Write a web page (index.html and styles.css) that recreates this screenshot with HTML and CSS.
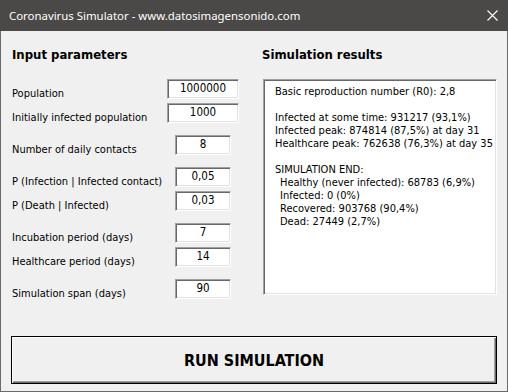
FILE: index.html
```html
<!DOCTYPE html>
<html>
<head>
<meta charset="utf-8">
<link rel="stylesheet" href="styles.css">
</head>
<body>
<div class="window">
  <div class="titlebar">
    <span class="title">Coronavirus Simulator - www.datosimagensonido.com</span>
    <svg class="close" width="11" height="11" viewBox="0 0 11 11"><path d="M0.5 0.5 L10.5 10.5 M10.5 0.5 L0.5 10.5" stroke="#fff" stroke-width="1.1"/></svg>
  </div>
  <div class="content">
    <div class="panels">
      <div class="left">
        <h2 class="heading">Input parameters</h2>
        <div class="params">
          <div class="row r1"><span class="label">Population</span><span class="field wide">1000000</span></div>
          <div class="row r2"><span class="label">Initially infected population</span><span class="field wide">1000</span></div>
          <div class="row r3"><span class="label">Number of daily contacts</span><span class="field">8</span></div>
          <div class="row r3"><span class="label">P (Infection | Infected contact)</span><span class="field">0,05</span></div>
          <div class="row r2"><span class="label">P (Death | Infected)</span><span class="field">0,03</span></div>
          <div class="row r3"><span class="label">Incubation period (days)</span><span class="field">7</span></div>
          <div class="row r2"><span class="label">Healthcare period (days)</span><span class="field">14</span></div>
          <div class="row r3"><span class="label">Simulation span (days)</span><span class="field">90</span></div>
        </div>
      </div>
      <div class="right">
        <h2 class="heading">Simulation results</h2>
        <div class="results">
          <div class="line">Basic reproduction number (R0): 2,8</div>
          <div class="line">&nbsp;</div>
          <div class="line">Infected at some time: 931217 (93,1%)</div>
          <div class="line">Infected peak: 874814 (87,5%) at day 31</div>
          <div class="line">Healthcare peak: 762638 (76,3%) at day 35</div>
          <div class="line">&nbsp;</div>
          <div class="line">SIMULATION END:</div>
          <div class="line sub">Healthy (never infected): 68783 (6,9%)</div>
          <div class="line sub">Infected: 0 (0%)</div>
          <div class="line sub">Recovered: 903768 (90,4%)</div>
          <div class="line sub">Dead: 27449 (2,7%)</div>
        </div>
      </div>
    </div>
    <button class="run">RUN SIMULATION</button>
  </div>
</div>
</body>
</html>
```

FILE: styles.css
```css
* { box-sizing: border-box; }
html, body { margin: 0; padding: 0; }
body { width: 508px; height: 392px; overflow: hidden; background: #f0f0f0; }

.window {
  width: 508px;
  height: 392px;
  display: flex;
  flex-direction: column;
  border: 1px solid #6b6b6b;
  border-top: none;
  background: #f0f0f0;
  font-family: "DejaVu Sans Condensed", "DejaVu Sans", sans-serif;
  color: #000;
}

.titlebar {
  height: 31px;
  margin: 0 -1px;
  background: #4a4947;
  display: flex;
  align-items: center;
  justify-content: space-between;
  padding: 0 10px 0 9px;
}
.title {
  color: #fff;
  font-family: "Noto Sans", "Open Sans", sans-serif;
  font-size: 11.4px;
  padding-bottom: 1px;
}
.close { display: block; margin-top: -1px; }

.content {
  flex: 1;
  display: flex;
  flex-direction: column;
  padding: 16px 10px 0 10px;
}

.panels { display: flex; height: 272px; }
.left { width: 241px; padding-left: 1px; }
.right { flex: 1; padding-left: 10px; }

.heading {
  margin: 0;
  font-size: 13px;
  line-height: 16px;
  font-weight: bold;
  height: 16px;
}

.params { margin-top: 16px; display: flex; flex-direction: column; }
.row {
  display: grid;
  grid-template-columns: 155px 72px;
  align-items: start;
  height: 20px;
  font-size: 11px;
}
.r2 { margin-top: 4px; }
.r3 { margin-top: 12px; }
.params .row:first-child { margin-top: 0; }

.label { padding-top: 7px; line-height: 15px; white-space: nowrap; }

.field {
  justify-self: center;
  width: 56px;
  height: 20px;
  background: #fff;
  border: 1px solid;
  border-color: #a0a0a0 #ffffff #ffffff #a0a0a0;
  box-shadow: inset 1px 1px #696969, inset -1px -1px #e3e3e3;
  text-align: center;
  line-height: 16px;
  font-size: 11.5px;
}
.field.wide { width: 72px; }

.results {
  margin-top: 16px;
  margin-left: 1px;
  width: 234px;
  height: 216px;
  background: #fff;
  border: 1px solid;
  border-color: #a0a0a0 #ffffff #ffffff #a0a0a0;
  box-shadow: inset 1px 1px #696969, inset -1px -1px #e3e3e3;
  padding: 5px 0 0 11px;
  font-size: 11px;
  line-height: 13px;
}
.line { white-space: pre; }
.sub { padding-left: 5px; }

.run {
  margin: 17px 0 0 0;
  width: 486px;
  height: 48px;
  background: #f0f0f0;
  border: 1px solid #000;
  box-shadow: inset 1px 1px #fff, inset -1px -1px #696969, inset -2px -2px #a0a0a0;
  font-family: "DejaVu Sans Condensed", "DejaVu Sans", sans-serif;
  font-weight: bold;
  font-size: 16px;
  color: #000;
  padding: 0;
}
```
